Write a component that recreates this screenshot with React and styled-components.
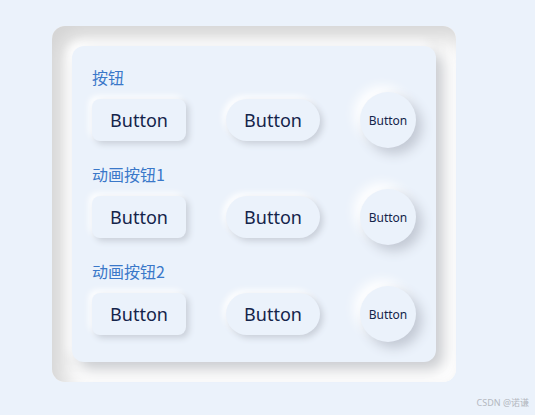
import React from 'react'
import styled, { createGlobalStyle } from 'styled-components'

const GlobalStyle = createGlobalStyle`
  html, body {
    margin: 0;
    padding: 0;
    background: #ebf2fb;
  }
  body {
    width: 535px;
    height: 415px;
    overflow: hidden;
    font-family: 'Noto Sans', 'Noto Sans CJK SC', sans-serif;
  }
`

const Page = styled.div`
  padding: 26px 0 0 52px;
`

const Frame = styled.div`
  width: 404px;
  height: 356px;
  box-sizing: border-box;
  padding: 20px;
  border-radius: 13px;
  background: #fcfcfc;
  box-shadow: inset 12px 12px 22px #d4d4d4, inset -10px -10px 20px #ffffff;
`

const Panel = styled.div`
  height: 316px;
  box-sizing: border-box;
  padding: 20px;
  border-radius: 12px;
  background: #ebf2fb;
  box-shadow: 7px 7px 14px #c9cbcf, -4px -4px 10px #ffffff;
  display: flex;
  flex-direction: column;
  gap: 15px;
`

const Section = styled.div`
  display: flex;
  flex-direction: column;
  gap: 4px;
`

const Label = styled.div`
  height: 22px;
  line-height: 22px;
  font-size: 16px;
  color: #3a78c9;
  font-family: 'Noto Sans CJK SC', 'Noto Sans', sans-serif;
`

const Row = styled.div`
  height: 56px;
  display: flex;
  align-items: center;
  gap: 40px;
`

const radii = { square: '8px', pill: '21px', circle: '50%' }

const Btn = styled.button`
  border: none;
  outline: none;
  cursor: pointer;
  padding: 0;
  background: #ebf2fb;
  color: #14244a;
  font-family: 'Noto Sans', sans-serif;
  width: ${(p) => (p.$shape === 'circle' ? '56px' : '94px')};
  height: ${(p) => (p.$shape === 'circle' ? '56px' : '42px')};
  font-size: ${(p) => (p.$shape === 'circle' ? '12px' : '18px')};
  border-radius: ${(p) => radii[p.$shape]};
  box-shadow: ${(p) =>
    p.$shape === 'circle'
      ? '6px 6px 12px #c3c9d4, -6px -6px 12px #ffffff'
      : '3px 3px 6px #c9cfd9, -3px -3px 6px #ffffff'};
  transition: box-shadow 0.2s;
  &:active {
    box-shadow: inset 3px 3px 6px #c9cfd9, inset -3px -3px 6px #ffffff;
  }
`

const Watermark = styled.div`
  position: absolute;
  right: 6px;
  bottom: 6px;
  font-size: 9px;
  color: #b4b8bf;
  font-family: 'Noto Sans', 'Noto Sans CJK SC', sans-serif;
`

const groups = ['按钮', '动画按钮1', '动画按钮2']

const App = () => {
  return (
    <>
      <GlobalStyle />
      <Page>
        <Frame>
          <Panel>
            {groups.map((title) => (
              <Section key={title}>
                <Label>{title}</Label>
                <Row>
                  <Btn $shape='square'>Button</Btn>
                  <Btn $shape='pill'>Button</Btn>
                  <Btn $shape='circle'>Button</Btn>
                </Row>
              </Section>
            ))}
          </Panel>
        </Frame>
      </Page>
      <Watermark>CSDN @诺谦</Watermark>
    </>
  )
}

export default App
